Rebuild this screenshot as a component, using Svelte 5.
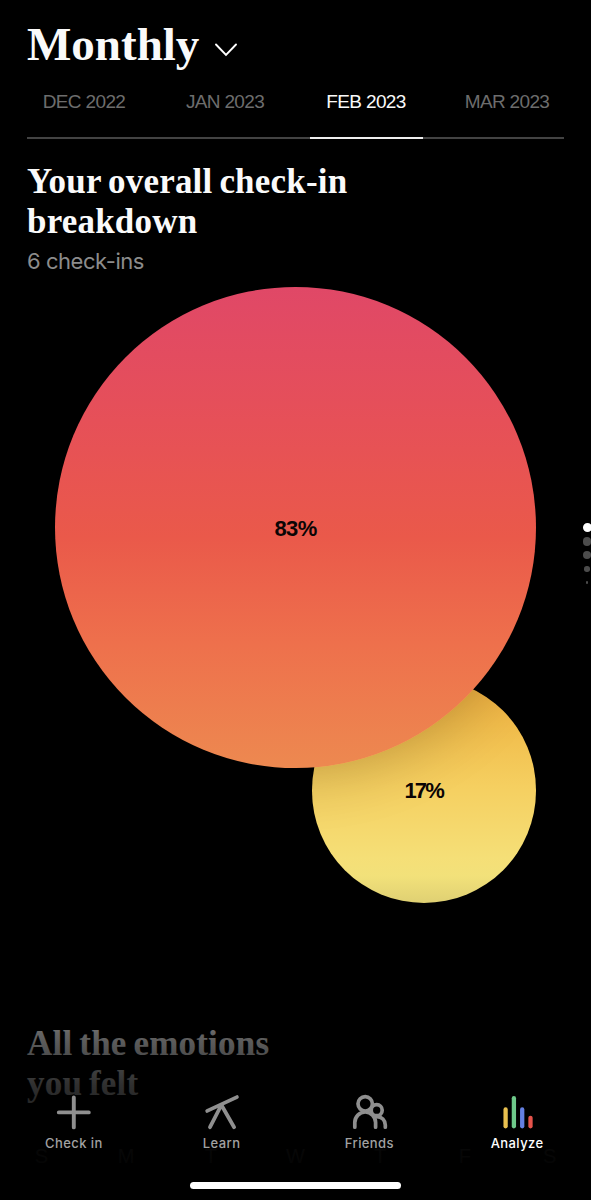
<script lang="ts">
	interface Bubble {
		name: string;
		percent: number;
	}

	const months = ['DEC 2022', 'JAN 2023', 'FEB 2023', 'MAR 2023'];
	const weekdays = ['S', 'M', 'T', 'W', 'T', 'F', 'S'];
	const bubbles: Bubble[] = [
		{ name: 'yellow', percent: 17 },
		{ name: 'red', percent: 83 }
	];
	const dots = [9, 8.5, 8.5, 5.5, 2.5];

	let month = $state('FEB 2023');
	let tab = $state('Analyze');
</script>

{#snippet navItem(label: string)}
	<button class="nav-item" class:current={tab === label} onclick={() => (tab = label)}>
		<svg width="40" height="40" viewBox="0 0 40 40" fill="none" stroke-linecap="round">
			{#if label === 'Check in'}
				<path d="M20.3 5.4v30M5.3 20.4h30" stroke="#8f8f8f" stroke-width="3.9" />
			{:else if label === 'Learn'}
				<path d="M5.7 18.9 35.4 5.1M19.9 13 8.5 35.2M19.9 13 32.6 35.2" stroke="#8f8f8f" stroke-width="3.8" />
			{:else if label === 'Friends'}
				<g stroke="#8f8f8f" stroke-width="3.7">
					<circle cx="15.7" cy="11.8" r="7.2" />
					<path d="M5.3 35.2V30.6a10.4 10.6 0 0 1 20.8 0v4.6" />
					<circle cx="27.2" cy="18.2" r="5.5" />
					<path d="M27.2 24.6c5.1 0 8.6 3.6 8.6 8.4v2.2" />
				</g>
			{:else}
				<g stroke-width="4.3">
					<path d="M8.1 17.5v16.8" stroke="#e9c04f" />
					<path d="M16.4 6.2v28.1" stroke="#6ec98a" />
					<path d="M24.7 17.5v16.8" stroke="#6480e3" />
					<path d="M33 25.8v8.5" stroke="#e5534b" />
				</g>
			{/if}
		</svg>
		<span>{label}</span>
	</button>
{/snippet}

<div class="screen">
	<header>
		<h1>Monthly</h1>
		<svg class="chevron" width="22" height="14" viewBox="0 0 22 14" fill="none">
			<path d="M1 1.5 11 11.8 21 1.5" stroke="#fff" stroke-width="1.9" stroke-linecap="round" />
		</svg>
	</header>

	<div class="months">
		{#each months as m}
			<button class:active={m === month} onclick={() => (month = m)}>{m}</button>
		{/each}
	</div>

	<section>
		<h2>Your overall check-in<br />breakdown</h2>
		<p class="count">6 check-ins</p>
		<div class="chart">
			{#each bubbles as b}
				<div class="bubble {b.name}"><span>{b.percent}%</span></div>
			{/each}
		</div>
	</section>

	<section>
		<h2>All the emotions<br />you felt</h2>
		<div class="week">
			{#each weekdays as d}
				<span>{d}</span>
			{/each}
		</div>
	</section>

	<div class="pager">
		{#each dots as size}
			<div class="slot"><i style="width: {size}px; height: {size}px"></i></div>
		{/each}
	</div>

	<nav>
		<div class="nav-row">
			{@render navItem('Check in')}
			{@render navItem('Learn')}
			{@render navItem('Friends')}
			{@render navItem('Analyze')}
		</div>
		<div class="home"></div>
	</nav>
</div>

<style>
	:global(body) {
		background: #000;
	}

	.screen {
		position: relative;
		box-sizing: border-box;
		width: 591px;
		height: 1200px;
		padding: 16px 27px 0;
		overflow: hidden;
		background: #000;
		color: #fafafa;
		font-family: 'Liberation Sans', Arial, sans-serif;
	}

	button {
		border: 0;
		padding: 0;
		background: none;
		font: inherit;
		color: inherit;
	}

	header {
		display: flex;
		align-items: center;
		gap: 16px;
		height: 56px;
	}

	h1,
	h2 {
		margin: 0;
		font-family: 'Liberation Serif', 'Times New Roman', serif;
		font-weight: 700;
	}

	h1 {
		font-size: 47px;
		line-height: 56px;
	}

	.chevron {
		margin-top: 11px;
	}

	.months {
		display: grid;
		grid-template-columns: repeat(4, 141px);
		justify-content: center;
		height: 67px;
		background: linear-gradient(#434343, #434343) bottom / 100% 2px no-repeat;
	}

	.months button {
		display: flex;
		flex-direction: column;
		align-items: center;
		padding-top: 19px;
		font-size: 19px;
		line-height: 22px;
		letter-spacing: -0.65px;
		color: #6d6d6d;
	}

	.months .active {
		color: #fafafa;
		background: linear-gradient(#eee, #eee) bottom / 113px 2px no-repeat;
	}

	h2 {
		padding-top: 23px;
		font-size: 35px;
		line-height: 40px;
		letter-spacing: 0.2px;
		word-spacing: -2px;
	}

	.count {
		margin: 6px 0 0;
		font-family: Inter, sans-serif;
		font-size: 22px;
		line-height: 26px;
		letter-spacing: -0.45px;
		color: #8c8c8c;
	}

	.chart {
		position: relative;
		height: 727px;
	}

	.bubble {
		position: absolute;
		display: flex;
		align-items: center;
		justify-content: center;
		border-radius: 50%;
		font-size: 22px;
		font-weight: 700;
		letter-spacing: -0.6px;
		color: #0b0505;
	}

	.bubble span {
		padding-top: 2px;
	}

	.red {
		left: 28px;
		top: 13px;
		width: 481px;
		height: 481px;
		background: linear-gradient(#e04867 0%, #e65058 28%, #ea594a 52%, #ee704c 74%, #ed8950 100%);
		box-shadow: 0 0 64px rgba(0, 0, 0, 0.24);
	}

	.yellow {
		left: 284.5px;
		top: 404px;
		width: 224.5px;
		height: 224.5px;
		letter-spacing: -1.8px;
		background: linear-gradient(#efae3e 0%, #f1bd4c 22%, #f5cf60 48%, #f5df77 80%, #f2e17a 88%, #dfd073 100%);
	}

	.week {
		display: grid;
		grid-template-columns: repeat(7, 84.7px);
		justify-content: center;
		margin-top: 40px;
		font-size: 20px;
		line-height: 24px;
		text-align: center;
		color: #777;
	}

	.pager {
		position: absolute;
		top: 521px;
		right: -1px;
		display: grid;
		grid-auto-rows: 13.7px;
		width: 10px;
	}

	.slot {
		display: grid;
		place-items: center;
	}

	.slot i {
		border-radius: 50%;
		background: #4c4c4c;
	}

	.slot:first-child i {
		background: #fff;
	}

	nav {
		position: absolute;
		left: 0;
		right: 0;
		bottom: 0;
		box-sizing: border-box;
		height: 220px;
		padding-top: 112px;
		background: linear-gradient(transparent, rgba(0, 0, 0, 0.6) 24%, rgba(0, 0, 0, 0.81) 48%, rgba(0, 0, 0, 0.94) 76%, #000);
	}

	.nav-row {
		display: grid;
		grid-template-columns: repeat(4, 1fr);
	}

	.nav-item {
		display: flex;
		flex-direction: column;
		align-items: center;
		gap: 2px;
		font-family: Inter, sans-serif;
		font-size: 13px;
		font-weight: 500;
		line-height: 18px;
		letter-spacing: 0.4px;
		color: #a2a2a2;
	}

	.nav-item svg {
		width: 45px;
		height: 40px;
	}

	.current {
		color: #fff;
	}

	.home {
		width: 211px;
		height: 7px;
		margin: 30px auto 0;
		border-radius: 4px;
		background: #fff;
	}
</style>
